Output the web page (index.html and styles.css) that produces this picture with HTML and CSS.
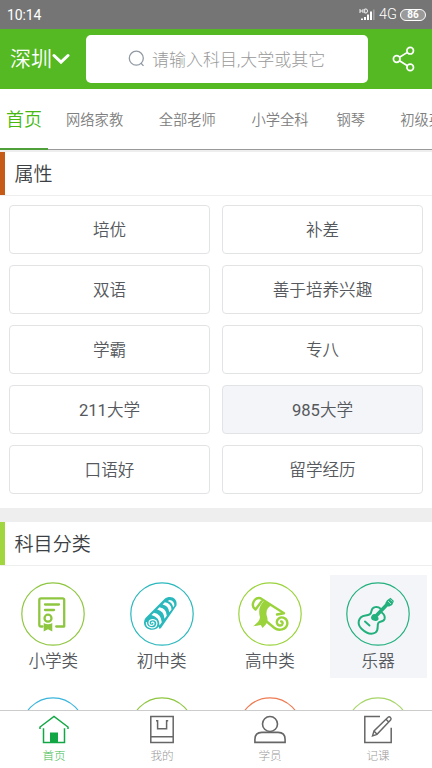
FILE: index.html
```html
<!DOCTYPE html>
<html lang="zh-CN">
<head>
<meta charset="utf-8">
<title>首页</title>
<link rel="stylesheet" href="styles.css">
</head>
<body>
<div class="app">
  <div class="status">
    <span class="time">10:14</span>
    <svg class="signal" width="17" height="14" viewBox="0 0 17 14" fill="#fff">
      <path d="M1 1v4M4 1v4M1 3h3M5.700 1v4h1.300q1.500 0 1.500-2t-1.500-2z" fill="none" stroke="#fff" stroke-width=".9"/>
      <path d="M2 10.500h2V12H2zM5 9h2v3H5zM8 6.500h2V12H8zM11 3.500h2V12h-2z"/>
      <path d="M14 1.500h1.600V12H14z" opacity=".3"/>
    </svg>
    <span class="net">4G</span>
    <span class="battery">86</span>
  </div>

  <header class="header">
    <div class="city"><span>深圳</span>
      <svg width="18" height="12" viewBox="0 0 18 12"><path d="M2 2.500 9 9.200 16 2.500" fill="none" stroke="#fff" stroke-width="3" stroke-linecap="round"/></svg>
    </div>
    <div class="search">
      <svg width="18" height="18" viewBox="0 0 18 18" fill="none" stroke="#9199a3" stroke-width="1.300"><circle cx="8.300" cy="8.200" r="7"/><path d="m12.800 13 2.700 2.900"/></svg>
      <span>请输入科目,大学或其它</span>
    </div>
    <svg class="share" width="24" height="26" viewBox="0 0 24 26" fill="none" stroke="#fff" stroke-width="1.700"><circle cx="4.700" cy="13" r="3.300"/><circle cx="18.200" cy="4.700" r="3.300"/><circle cx="18.200" cy="21.400" r="3.300"/><path d="m7.500 11.300 7.900-4.900M7.500 14.700l7.900 5"/></svg>
  </header>

  <nav class="tabs">
    <span class="tab active">首页</span>
    <span class="tab">网络家教</span>
    <span class="tab">全部老师</span>
    <span class="tab">小学全科</span>
    <span class="tab short">钢琴</span>
    <span class="tab">初级英语</span>
  </nav>

  <main class="content">
    <section>
      <h2 class="title orange">属性</h2>
      <div class="options">
        <div class="option">培优</div><div class="option">补差</div>
        <div class="option">双语</div><div class="option">善于培养兴趣</div>
        <div class="option">学霸</div><div class="option">专八</div>
        <div class="option"><span class="num">211</span>大学</div><div class="option pressed"><span class="num">985</span>大学</div>
        <div class="option">口语好</div><div class="option">留学经历</div>
      </div>
    </section>
    <section class="subjects">
      <h2 class="title lime">科目分类</h2>
      <div class="grid">
        <div class="cell">
          <svg class="c-green" width="64" height="64" viewBox="0 0 64 64">
            <circle class="ring" cx="32" cy="32" r="31.200"/>
            <g fill="none" stroke="currentColor" stroke-width="2.300" stroke-linecap="round" stroke-linejoin="round">
              <path d="M21.500 44.500H20q-1.700 0-1.700-1.700V18q0-1.700 1.700-1.700h21.500q1.700 0 1.700 1.700v26.500h-8M24 22.500h14M24 28h9"/>
              <circle cx="27" cy="36.200" r="3.500"/>
            </g>
            <path fill="currentColor" d="M22.700 41q4.300 2.400 8.600 0v8.600L27 47.200l-4.300 2.400z"/>
          </svg>
          <span>小学类</span>
        </div>
        <div class="cell">
          <svg class="c-teal" width="64" height="64" viewBox="0 0 64 64">
            <circle class="ring" cx="32" cy="32" r="31.200"/>
            <path fill="currentColor" d="M15.500 36 34.500 17c5.200-4.300 13.400-1.500 12 6.500L31 46l-1.500 1-.9-2.500C25.500 50 14 48.500 14 40.500q0-2.500 1.500-4.500z"/>
            <g fill="#fff">
              <path d="M24 30.800q7 1.200 7.800 9.400l-2.300 3.300q0-8.500-8-10.500z"/>
              <path d="M29.500 25.300q7 1.200 7.300 8.400l-2.300 3Q34 29 27.200 27.500z"/>
              <path d="M34.800 20.200q6.200 1 6.700 7.200l-2.200 2.900q-.7-6.500-6.700-7.800z"/>
              <path d="M39.500 18q4.800.7 4.900 5.500l-1.300 1.800q-.8-5-5.300-6.300z"/>
            </g>
            <path fill="none" stroke="#fff" stroke-width="1.200" stroke-linecap="round" d="M21.600 41c.2-1.600 2.500-1 2.400.6-.2 2.600-5 2.500-5-.8 0-4.500 7.900-4.400 7.900.8 0 6-10.500 5.700-10.500-1"/>
          </svg>
          <span>初中类</span>
        </div>
        <div class="cell">
          <svg class="c-lime" width="64" height="64" viewBox="0 0 64 64">
            <circle class="ring" cx="32" cy="32" r="31.200"/>
            <g fill="none" stroke="currentColor" stroke-width="2.400" stroke-linecap="round" stroke-linejoin="round">
              <path d="M17.500 27.500c-5.500-4-1.500-12.500 5-11.300L46 31.300l-7 1.200M17.500 27.500l6-8M28 39l8.500 7c4 3.200 12 1.700 12.800-4 .6-5-4.700-8.300-8.600-5.500-3.500 2.700-1.500 7.500 1.700 7 2.700-.4 3-3.900.7-4"/>
            </g>
            <path fill="currentColor" d="M27 18.500 34 23c-4.500 2-6.700 6.500-5 11.500 2 6-2 9-4.500 11.500l-1.700-3-7.800 1.300c4-3 6.500-5 7-9-2-7-.5-12.800 5-16.800z"/>
          </svg>
          <span>高中类</span>
        </div>
        <div class="cell pressed">
          <svg class="c-jade" width="64" height="64" viewBox="0 0 64 64">
            <circle class="ring" cx="32" cy="32" r="31.200"/>
            <g fill="none" stroke="currentColor" stroke-linecap="round" stroke-linejoin="round">
              <path stroke-width="2" d="M34.500 26.700c-3-3-8.300-1.900-9 2.100-.5 3.700-2.500 4.200-6 4.700-8 1.300-8.500 9-4 13.200 4.500 4.300 10 6.300 14 3.800 3.700-2.700 1.200-6.700 2.800-9.500 1.600-2.200 5.400-.7 6.300-4.300.5-2.500-.6-4.500-2.600-6"/>
              <path stroke-width="3.600" d="m29.500 34.500 11.800-12.200"/>
              <path stroke-width="1.900" d="m19 39.500 4.500 4"/>
            </g>
            <path fill="currentColor" d="M28.700 32 32.500 35.700q.5 2.700-2.300 3.200-5 .3-5.200-3.300.4-3.300 3.700-3.600zM41 18.200l3.500-2.500 3.400 3.400-1.700 4-3.500 1.700-3.500-3.600z"/>
            <path d="m42 19 3 3M44.300 17.500l2 2" stroke="#f4f5f9" stroke-width=".7"/>
          </svg>
          <span>乐器</span>
        </div>
        <div class="cell"><svg class="c-sky" width="64" height="64" viewBox="0 0 64 64"><circle class="ring" cx="32" cy="32" r="31.200"/></svg></div>
        <div class="cell"><svg class="c-green" width="64" height="64" viewBox="0 0 64 64"><circle class="ring" cx="32" cy="32" r="31.200"/></svg></div>
        <div class="cell"><svg class="c-coral" width="64" height="64" viewBox="0 0 64 64"><circle class="ring" cx="32" cy="32" r="31.200"/></svg></div>
        <div class="cell"><svg class="c-pale" width="64" height="64" viewBox="0 0 64 64"><circle class="ring" cx="32" cy="32" r="31.200"/></svg></div>
      </div>
    </section>
  </main>

  <footer class="bottom">
    <div class="item active">
      <svg width="32" height="32" viewBox="0 0 32 32" fill="none" stroke="currentColor" stroke-width="1.500"><path d="M2 15v-2L16 2.500 30 13v2M5.500 14.300v14.200h21V14.300"/><path fill="currentColor" stroke="none" d="M12 18.500h8v10h-8z"/></svg>
      <span>首页</span>
    </div>
    <div class="item">
      <svg width="32" height="32" viewBox="0 0 32 32" fill="none" stroke="currentColor" stroke-width="1.500"><path d="M4.800 2.500h22.400v26H4.800zM4.800 22.800h22.400M10 6.700h1.600v8h9v-8h1.600"/></svg>
      <span>我的</span>
    </div>
    <div class="item">
      <svg width="32" height="32" viewBox="0 0 32 32" fill="none" stroke="currentColor" stroke-width="1.600"><circle cx="16" cy="10" r="7.500"/><path d="M.9 28.400v-3q0-7 7-7h16.200q7 0 7 7v3z"/></svg>
      <span>学员</span>
    </div>
    <div class="item">
      <svg width="32" height="32" viewBox="0 0 32 32" fill="none" stroke="currentColor" stroke-width="1.500"><path d="M18 2.500H2.800v26h26.400V13.800"/><path d="M10.500 21.900 12 17 26 3.300q1.300-1 2.500.2t.1 2.600L15 20.300zM24 5.300l2.700 2.700M12 17l3 3.300" stroke-width="1.400"/></svg>
      <span>记课</span>
    </div>
  </footer>
</div>
</body>
</html>
```
FILE: styles.css
```css
* { box-sizing: border-box; }
body {
  margin: 0;
  font-family: Roboto, "Noto Sans CJK SC", sans-serif;
  font-weight: 350;
  color: #55585c;
  background: #fff;
}
svg { display: block; flex: none; }
.app {
  width: 432px;
  height: 768px;
  display: flex;
  flex-direction: column;
  overflow: hidden;
}
.status {
  flex: none;
  height: 29px;
  padding: 0 6px 0 7px;
  display: flex;
  align-items: center;
  background: #757575;
  color: #fff;
  font-weight: 400;
}
.time { flex: 1; font-size: 14px; letter-spacing: -.1px; }
.signal { margin-right: 3px; }
.net { font-size: 14.500px; margin-right: 3px; font-weight: 350; }
.battery {
  width: 26px;
  height: 12px;
  border: 1px solid #fff;
  border-radius: 6px;
  background: #999;
  font-size: 10px;
  font-weight: 700;
  line-height: 10px;
  text-align: center;
}
.header {
  flex: none;
  height: 60px;
  padding-left: 10px;
  display: flex;
  align-items: center;
  background: #54b922;
  color: #fff;
}
.city {
  width: 76px;
  display: flex;
  align-items: center;
  font-size: 21px;
  white-space: nowrap;
}
.city span { line-height: 30px; }
.search {
  width: 282px;
  height: 48px;
  padding-left: 42px;
  display: flex;
  align-items: center;
  gap: 6px;
  background: #fff;
  border-radius: 5px;
  color: #999;
  font-size: 17px;
  font-weight: 300;
  white-space: nowrap;
}
.search span { padding-bottom: 1px; }
.share { margin-left: 24px; }
.tabs {
  flex: none;
  height: 63px;
  display: flex;
  border-bottom: 2px solid #eee;
  box-shadow: inset 0 -1px #999;
  overflow: hidden;
}
.tab {
  flex: none;
  height: 61px;
  line-height: 62px;
  padding: 0 18px;
  font-size: 14.300px;
  color: #808080;
  white-space: nowrap;
}
.tab:nth-child(n+3) { padding-left: 17.500px; }
.tab.short { padding: 0 17.500px 0 10px; }
.tab.active {
  width: 48px;
  padding: 0;
  text-align: center;
  font-size: 18px;
  color: #46b80f;
  border-bottom: 2px solid #4f9f3b;
}
.content { flex: 1; min-height: 0; overflow: hidden; }
.title {
  margin: 0;
  height: 44px;
  line-height: 45px;
  padding-left: 9.500px;
  border-bottom: 1px solid #eee;
  font-size: 19.100px;
  font-weight: 350;
  color: #3c3f44;
  display: flex;
}
.title::before {
  content: "";
  width: 5px;
  height: 43px;
  margin: 0 9.500px 0 -9.500px;
}
.orange::before { background: #c65a17; }
.lime::before { background: #a2d63f; }
.options {
  padding: 9px 9px 14px;
  display: grid;
  grid-template-columns: 1fr 1fr;
  gap: 11px 12px;
}
.option {
  height: 49px;
  line-height: 50px;
  border: 1px solid #e2e3e5;
  border-radius: 4px;
  text-align: center;
  font-size: 16.600px;
}
.num { font-weight: 400; }
.pressed { background: #f4f5f9; }
.subjects { border-top: 14px solid #eee; }
.grid {
  padding: 9px 0 0;
  display: grid;
  grid-template-columns: repeat(4, 97px);
  column-gap: 11.300px;
  row-gap: 12px;
  margin-left: 4.800px;
}
.cell {
  height: 103px;
  padding-top: 7px;
  display: flex;
  flex-direction: column;
  align-items: center;
  font-size: 16.600px;
  line-height: 31px;
}
.ring { fill: none; stroke: currentColor; stroke-width: 1.200; }
.c-green { color: #8fc640; }
.c-teal { color: #2bb8bd; }
.c-lime { color: #9ad33c; }
.c-jade { color: #22b07d; }
.c-sky { color: #3bb5dc; }
.c-coral { color: #ee7b52; }
.c-pale { color: #a6d567; }
.bottom {
  flex: none;
  height: 58px;
  display: flex;
  background: #fff;
  border-top: 1px solid #ccc;
}
.item {
  flex: 1;
  padding-top: 3px;
  display: flex;
  flex-direction: column;
  align-items: center;
  font-size: 11.600px;
  font-weight: 300;
  line-height: 20px;
  color: #999;
}
.item svg { color: #666; }
.item.active { color: #3fbb50; }
.item.active svg { color: #12a744; }
```
